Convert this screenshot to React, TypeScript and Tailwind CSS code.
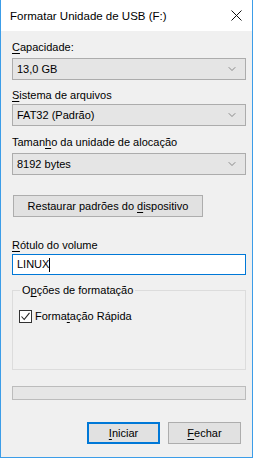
import { ChevronDown } from "lucide-react";

const Combo = ({ value }: { value: string }) => (
  <div className="h-[22px] w-[234px] border border-[#acacac] bg-[#e5e5e5] flex items-center justify-between pl-[4px] pr-[7px]">
    <span>{value}</span>
    <ChevronDown size={12} strokeWidth={1.2} className="text-[#4a4a4a]" />
  </div>
);

const App = () => {
  return (
    <div
      className="w-[253px] h-[458px] bg-[#f0f0f0] border-x border-b border-[#3c9de8] flex flex-col text-[11px] text-black leading-[15px]"
      style={{ fontFamily: '"Segoe UI", "Liberation Sans", sans-serif' }}
    >
      {/* title bar */}
      <div className="h-[31px] bg-white flex items-center justify-between pl-[9px] pr-[10px] shrink-0">
        <span className="text-[11.5px] pt-[1px]">Formatar Unidade de USB (F:)</span>
        <svg width="11" height="11" viewBox="0 0 11 11">
          <path d="M0.5 0.5 L10.5 10.5 M10.5 0.5 L0.5 10.5" stroke="#111" strokeWidth="1" />
        </svg>
      </div>

      <div className="flex flex-col pl-[11px]">
        <label className="mt-[9px]">
          <span className="underline underline-offset-2">C</span>apacidade:
        </label>
        <div className="mt-[3px]">
          <Combo value="13,0 GB" />
        </div>

        <label className="mt-[8px]">
          <span className="underline underline-offset-2">S</span>istema de arquivos
        </label>
        <div className="mt-[1px]">
          <Combo value="FAT32 (Padrão)" />
        </div>

        <label className="mt-[9px]">
          Taman<span className="underline underline-offset-2">h</span>o da unidade de alocação
        </label>
        <div className="mt-[3px]">
          <Combo value="8192 bytes" />
        </div>

        <button
          type="button"
          className="mt-[20px] ml-[1px] h-[22px] w-[190px] border border-[#adadad] bg-[#e1e1e1] flex items-center justify-center"
        >
          Restaurar padrões do <span className="underline underline-offset-2 ml-[3px]">d</span>ispositivo
        </button>

        <label className="mt-[21px]">
          <span className="underline underline-offset-2">R</span>ótulo do volume
        </label>
        <div className="mt-[1px] h-[21px] w-[234px] border border-[#0078d7] bg-white flex items-center pl-[4px]">
          <span>LINUX</span>
          <span className="w-px h-[14px] bg-black" />
        </div>

        <fieldset className="mt-[9px] h-[86px] w-[234px] border border-[#dcdcdc] px-[6px] pb-0 m-0 min-w-0">
          <legend className="px-[2px] ml-[1px] leading-[13px]">
            O<span className="underline underline-offset-2">p</span>ções de formatação
          </legend>
          <div className="flex items-center mt-[12px] gap-[3px]">
            <span className="w-[13px] h-[13px] border border-[#333] bg-white flex items-center justify-center">
              <svg width="11" height="11" viewBox="0 0 11 11">
                <path d="M1.5 5.5 L4.2 8.5 L9.5 1.8" fill="none" stroke="#222" strokeWidth="1.1" />
              </svg>
            </span>
            <span>
              Forma<span className="underline underline-offset-2">t</span>ação Rápida
            </span>
          </div>
        </fieldset>

        <div className="mt-[16px] h-[14px] w-[234px] border border-[#bcbcbc] bg-[#e6e6e6]" />

        <div className="mt-[22px] flex gap-[8px] pl-[75px]">
          <button
            type="button"
            className="h-[22px] w-[73px] border-2 border-[#0078d7] bg-[#e1e1e1] flex items-center justify-center"
          >
            <span className="underline underline-offset-2">I</span>niciar
          </button>
          <button
            type="button"
            className="h-[22px] w-[73px] border border-[#adadad] bg-[#e1e1e1] flex items-center justify-center"
          >
            <span className="underline underline-offset-2">F</span>echar
          </button>
        </div>
      </div>
    </div>
  );
};

export default App;
